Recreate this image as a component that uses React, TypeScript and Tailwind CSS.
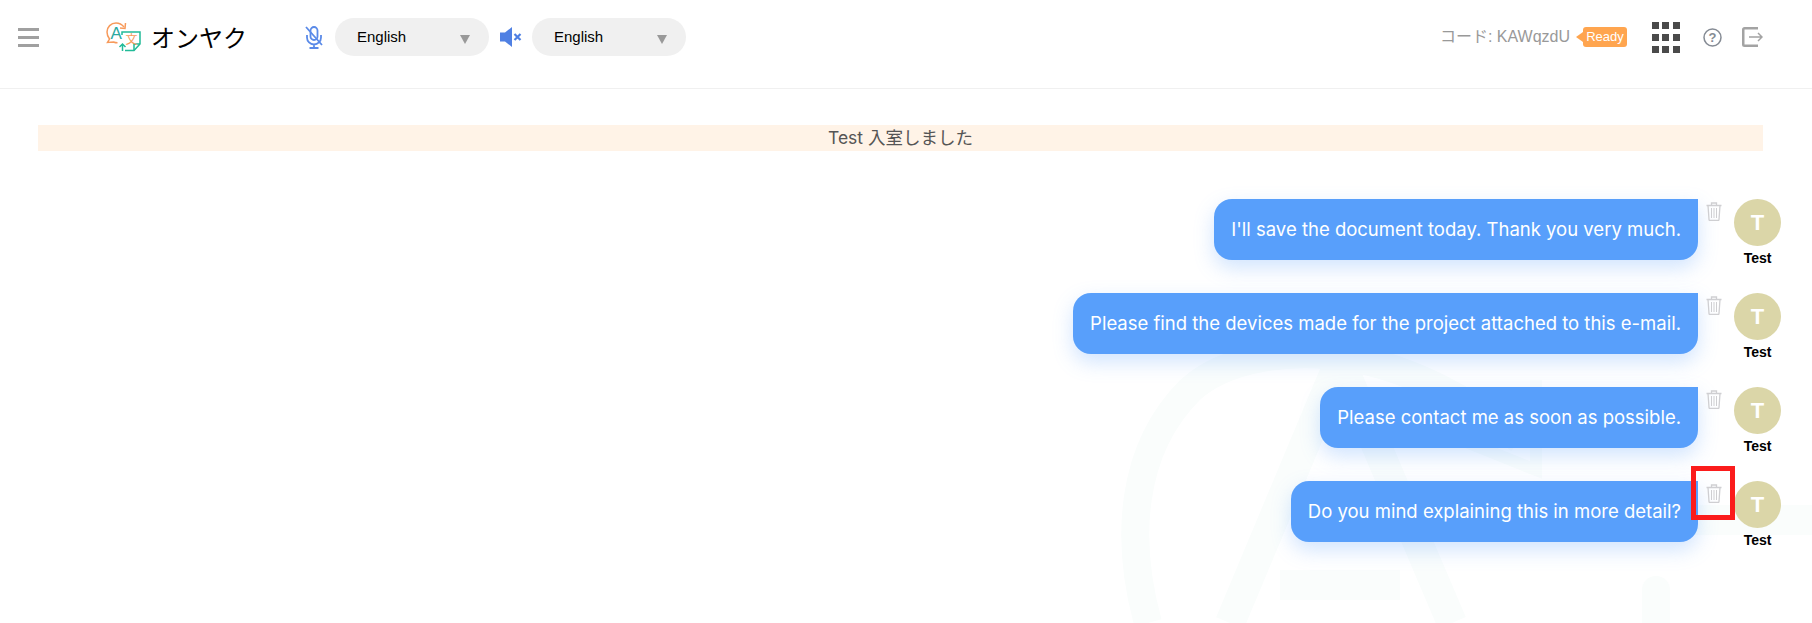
const messages = [
  "I'll save the document today. Thank you very much.",
  "Please find the devices made for the project attached to this e-mail.",
  "Please contact me as soon as possible.",
  "Do you mind explaining this in more detail?",
];

const Logo = () => (
  <svg width="36" height="30" viewBox="0 0 36 30" fill="none" className="shrink-0">
    <path d="M18 5C16 2.500 13 1 10 1 5 1 1 5 1 10c0 3 1 5 2.500 7L1.500 20.500l6-.5c1 .4 2.500.8 4 .8" stroke="#f79a5b" strokeWidth="1.500" />
    <path d="M19.500 1 19 6.500l-5-.5" stroke="#f79a5b" strokeWidth="1.500" />
    <text x="4.500" y="17" fontSize="17" fill="#2aa9a0" fontFamily="Liberation Sans, sans-serif">A</text>
    <path d="M16 13v-3h18v12l-6 6.500H19" stroke="#22bb98" strokeWidth="1.500" />
    <path d="M34 22h-6v6.500" stroke="#22bb98" strokeWidth="1.500" />
    <path d="M16.500 29v-7M13.500 25l3-3 3 3" stroke="#22bb98" strokeWidth="1.500" />
    <text x="19.500" y="22" fontSize="12" fill="#f79a5b" fontFamily="Noto Sans CJK JP, sans-serif">文</text>
  </svg>
);

const MutedMic = () => (
  <svg width="18" height="23" viewBox="0 0 18 23" fill="none" stroke="#5a8ae8" strokeWidth="1.800" className="shrink-0">
    <rect x="5.500" y="1" width="7" height="13" rx="3.500" />
    <path d="M2 9v2.500a7 7 0 0 0 14 0V9M9 18.500V22M4.500 22h9M1 1l16 18" />
  </svg>
);

const MutedSpeaker = () => (
  <svg width="22" height="20" viewBox="0 0 22 20" fill="#4f80e3" className="shrink-0">
    <path d="M0 5.500h5v9H0zM5 5.500 12 0v20l-7-5.500z" />
    <path d="M14.500 7l6 6m0-6-6 6" stroke="#4f80e3" strokeWidth="2.200" fill="none" />
  </svg>
);

const LangSelect = () => (
  <div className="flex h-[38px] w-[154px] shrink-0 items-center justify-between rounded-[19px] bg-[#f0f0f0] pl-[22px] pr-[19px]">
    <span className="mt-[1px] text-[15px] text-black">English</span>
    <span className="mt-[4px] h-0 w-0 border-x-[5px] border-t-[9px] border-x-transparent border-t-[#999999]" />
  </div>
);

const Trash = () => (
  <svg width="16" height="19" viewBox="0 0 16 19" fill="none" stroke="#cfcfd2" strokeWidth="1.300">
    <path d="M.5 3.500h15M5.500 3.500V1h5v2.500" />
    <path d="M2 3.500 3 17.500a1 1 0 0 0 1 1h8a1 1 0 0 0 1-1l1-14" />
    <path d="M5.500 6v10M8 6v10M10.500 6v10" strokeWidth="1" />
  </svg>
);

const ChatRow = ({ text }: { text: string }) => (
  <div className="flex h-[61px] items-start justify-end">
    <div className="flex h-[61px] items-center rounded-[18px] rounded-tr-none bg-[#589ffb] px-[17px] font-['Inter',sans-serif] text-[18.5px] text-white shadow-[0_8px_20px_rgba(88,159,251,0.28)]">
      {text}
    </div>
    <div className="ml-[8px] mt-[3px] w-[28px]">
      <Trash />
    </div>
    <div className="flex w-[47px] flex-col items-center">
      <div className="flex h-[47px] w-[47px] items-center justify-center rounded-full bg-[#dbd6a8] text-[22px] font-bold text-white">T</div>
      <span className="mt-[3px] text-[14px] font-bold leading-[18px] text-black">Test</span>
    </div>
  </div>
);

export default function App() {
  return (
    <div className="relative h-[623px] w-[1812px] overflow-hidden bg-white font-['Liberation_Sans','Noto_Sans_CJK_JP',sans-serif]">
      {/* faint logo behind the chat */}
      <svg width="712" height="283" viewBox="0 0 712 283" fill="none" stroke="#fafdfc" className="absolute left-[1100px] top-[340px]">
        <path d="M48 283C25 200 30 110 90 50 125 18 190 8 250 18 310 28 370 60 420 100" strokeWidth="28" />
        <path d="M130 283 240 20 352 283M180 245h120" strokeWidth="30" />
        <path d="M436 40v90l-70-28" strokeWidth="12" />
        <path d="M570 180h150" strokeWidth="30" />
        <path d="M556 250v40" strokeWidth="28" strokeLinecap="round" />
      </svg>

      <header className="relative flex h-[89px] items-center border-b border-[#f0f0f0] pb-[14px]">
        <div className="ml-[18px] flex h-[19px] w-[21px] flex-col justify-between">
          <span className="h-[3px] bg-[#a0a0a0]" />
          <span className="h-[3px] bg-[#a0a0a0]" />
          <span className="h-[3px] bg-[#a0a0a0]" />
        </div>
        <div className="ml-[67px] flex w-[199px] items-center">
          <Logo />
          <span className="ml-[9px] font-['Noto_Sans_CJK_JP',sans-serif] text-[24px] leading-none text-black">オンヤク</span>
        </div>
        <MutedMic />
        <div className="ml-[12px]"><LangSelect /></div>
        <div className="ml-[11px]"><MutedSpeaker /></div>
        <div className="ml-[10px]"><LangSelect /></div>

        <div className="ml-auto flex items-center pr-[49px]">
          <span className="text-[16px] text-[#999999]">コード: KAWqzdU</span>
          <span className="ml-[6px] h-0 w-0 border-y-[5px] border-r-[7px] border-y-transparent border-r-[#ffa54f]" />
          <span className="flex h-[20px] w-[44px] items-center justify-center rounded-[3px] bg-[#ffa54f] text-[13px] text-white">Ready</span>
          <div className="ml-[25px] grid h-[31px] w-[31px] grid-cols-3 content-between justify-between">
            {Array.from({ length: 9 }).map((_, i) => (
              <span key={i} className="h-[7px] w-[7px] bg-[#4a4a4a]" />
            ))}
          </div>
          <svg width="19" height="19" viewBox="0 0 19 19" fill="none" className="ml-[20px]">
            <circle cx="9.500" cy="9.500" r="8.500" stroke="#858b94" strokeWidth="1.500" />
            <text x="9.500" y="14" fontSize="13" textAnchor="middle" fill="#858b94" fontFamily="Liberation Sans, sans-serif" fontWeight="700">?</text>
          </svg>
          <svg width="21" height="20" viewBox="0 0 21 20" fill="none" stroke="#a3a3a3" strokeWidth="2.500" className="ml-[20px]">
            <path d="M16 1.250H2.500a1.250 1.250 0 0 0-1.250 1.250v15a1.250 1.250 0 0 0 1.250 1.250H16" />
            <path d="M7 10h13M16 6l4 4-4 4" strokeWidth="1.500" />
          </svg>
        </div>
      </header>

      <div className="relative mx-[38px] mt-[36px] flex h-[26px] w-[1725px] items-center justify-center bg-[#fff3e7] font-['Inter','Noto_Sans_CJK_JP',sans-serif] text-[17.5px] text-[#555555]">
        Test 入室しました
      </div>

      <div className="relative mt-[48px] flex flex-col gap-[33px] pr-[31px]">
        {messages.map((m) => (
          <ChatRow key={m} text={m} />
        ))}
      </div>

      {/* red annotation box from the screenshot */}
      <div className="absolute left-[1691px] top-[466px] h-[54px] w-[44px] border-[5px] border-[#fb1c1c]" />
    </div>
  );
}
